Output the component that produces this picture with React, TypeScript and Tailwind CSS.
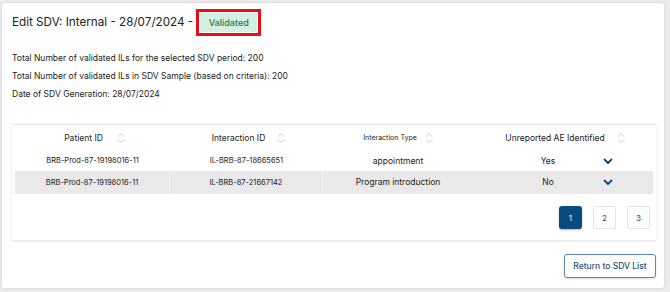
import React from "react";

const SortIcon = () => (
  <svg width="8" height="12" viewBox="0 0 8 12" fill="none" stroke="#c8c8c8" strokeWidth="1" strokeLinecap="round" strokeLinejoin="round">
    <path d="M1 4.5 L4 1.5 L7 4.5" />
    <path d="M1 7.5 L4 10.5 L7 7.5" />
  </svg>
);

const Chevron = () => (
  <svg width="10" height="7" viewBox="0 0 10 7" fill="none" stroke="#0b4a7f" strokeWidth="1.8" strokeLinecap="round" strokeLinejoin="round">
    <path d="M1.5 1.5 L5 5 L8.5 1.5" />
  </svg>
);

const rows = [
  { p: "BRB-Prod-87-19198016-11", i: "IL-BRB-87-18665651", t: "appointment", u: "Yes" },
  { p: "BRB-Prod-87-19198016-11", i: "IL-BRB-87-21667142", t: "Program introduction", u: "No" },
];

export default function App() {
  return (
    <div className="w-[670px] h-[292px] bg-[#ebebeb] pt-[3px] pl-[2px] pr-[6px] pb-[4px]" style={{ fontFamily: "Inter, 'Liberation Sans', sans-serif" }}>
      <div className="h-full bg-white rounded-[3px] shadow-[0_0_3px_rgba(0,0,0,0.12)] pl-[10px] pr-[6px] pt-[6px] flex flex-col">
        <div className="flex items-center h-[27px]">
          <span className="text-[11.7px] text-[#222] leading-none mt-[1px]">Edit SDV: Internal - 28/07/2024 -</span>
          <div className="ml-[3px] border-[3px] border-[#e30f1c] p-[1px] w-[65px] h-[27px] flex">
            <div className="flex-1 bg-[#d3f0e0] rounded-[2px] flex items-center justify-center text-[9px] font-medium text-[#207a50]">Validated</div>
          </div>
        </div>
        <div className="mt-[17px] flex flex-col gap-[8px] text-[8.5px] text-[#222] leading-[10px]">
          <div>Total Number of validated ILs for the selected SDV period: 200</div>
          <div>Total Number of validated ILs in SDV Sample (based on criteria): 200</div>
          <div>Date of SDV Generation: 28/07/2024</div>
        </div>
        <div className="mt-[25px] mr-[2px] h-[116px] border-t border-[#e6e6e6] shadow-[0_1px_3px_rgba(0,0,0,0.12)] px-[3px] flex flex-col">
          <div className="flex h-[24px] pt-[2px] items-center text-[#222]">
            <div className="w-[155px] flex items-center justify-center gap-[14px] text-[8.5px] pl-[4px]">
              <span>Patient ID</span><SortIcon />
            </div>
            <div className="w-[153px] flex items-center justify-center gap-[12px] text-[8.5px] pl-[4px]">
              <span>Interaction ID</span><SortIcon />
            </div>
            <div className="w-[150px] flex items-center justify-center gap-[8px] text-[7px]">
              <span>Interaction Type</span><SortIcon />
            </div>
            <div className="flex-1 flex items-center justify-center gap-[12px] text-[8.5px] pl-[4px]">
              <span>Unreported AE Identified</span><SortIcon />
            </div>
          </div>
          {rows.map((r, idx) => (
            <div key={idx} className={`flex items-center text-[#222] ${idx === 1 ? "bg-[#e9e9e9] h-[23px]" : "h-[22px] pt-[2px]"}`}>
              <div className={`w-[155px] h-full flex items-center justify-center text-[7.5px] ${idx === 1 ? "border-r border-[#f2f2f2]" : ""}`}>{r.p}</div>
              <div className={`w-[153px] h-full flex items-center justify-center text-[7.5px] ${idx === 1 ? "border-r border-[#f2f2f2]" : ""}`}>{r.i}</div>
              <div className="w-[150px] h-full flex items-center justify-center text-[8.5px]">{r.t}</div>
              <div className="flex-1 h-full flex items-center text-[8.5px]">
                <span className="w-[130px] pl-[20px] text-center">{r.u}</span>
                <Chevron />
              </div>
            </div>
          ))}
          <div className="flex justify-end gap-[11px] mt-[12px] pr-[3px]">
            <div className="w-[23px] h-[23px] rounded-[3px] bg-[#0b4a7f] text-white text-[8px] flex items-center justify-center shadow-[0_1px_2px_rgba(0,0,0,0.3)]">1</div>
            <div className="w-[23px] h-[23px] rounded-[2px] border border-[#e3e3e3] text-[#1d4f7c] text-[8px] flex items-center justify-center">2</div>
            <div className="w-[23px] h-[23px] rounded-[2px] border border-[#e3e3e3] text-[#1d4f7c] text-[8px] flex items-center justify-center">3</div>
          </div>
        </div>
        <div className="flex justify-end mt-[14px] pr-[2px]">
          <div className="w-[92px] h-[24px] rounded-[3px] border border-[#5b86ad] text-[#1d4f7c] text-[8.5px] font-medium flex items-center justify-center shadow-[0_1px_2px_rgba(0,0,0,0.15)]">Return to SDV List</div>
        </div>
      </div>
    </div>
  );
}
